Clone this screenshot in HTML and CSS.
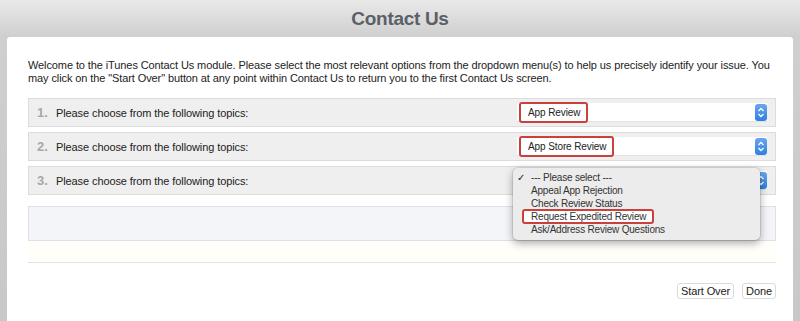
FILE: index.html
```html
<!DOCTYPE html>
<html>
<head>
    <title>Contact Us</title>
    <link rel="stylesheet" href="styles.css">
</head>
<body>
    <div class="header">
        <h1>Contact Us</h1>
    </div>
    <div class="panel">
        <p class="intro">Welcome to the iTunes Contact Us module. Please select the most relevant options from the dropdown menu(s) to help us precisely identify your issue. You may click on the "Start Over" button at any point within Contact Us to return you to the first Contact Us screen.</p>

        <div class="rows">
            <div class="row">
                <span class="num">1.</span>
                <span class="label">Please choose from the following topics:</span>
                <div class="select">
                    <span class="value"><span class="marked">App Review</span></span>
                    <span class="arrow"><svg width="8" height="11" viewBox="0 0 8 11"><path d="M1.5 4 L4 1.5 L6.5 4 M1.5 7 L4 9.5 L6.5 7" fill="none" stroke="#fff" stroke-width="1.3"/></svg></span>
                </div>
            </div>
            <div class="row">
                <span class="num">2.</span>
                <span class="label">Please choose from the following topics:</span>
                <div class="select">
                    <span class="value"><span class="marked">App Store Review</span></span>
                    <span class="arrow"><svg width="8" height="11" viewBox="0 0 8 11"><path d="M1.5 4 L4 1.5 L6.5 4 M1.5 7 L4 9.5 L6.5 7" fill="none" stroke="#fff" stroke-width="1.3"/></svg></span>
                </div>
            </div>
            <div class="row">
                <span class="num">3.</span>
                <span class="label">Please choose from the following topics:</span>
                <div class="select">
                    <span class="value"></span>
                    <span class="arrow"><svg width="8" height="11" viewBox="0 0 8 11"><path d="M1.5 4 L4 1.5 L6.5 4 M1.5 7 L4 9.5 L6.5 7" fill="none" stroke="#fff" stroke-width="1.3"/></svg></span>
                </div>
                <ul class="menu">
                    <li><span class="check">&#10003;</span>--- Please select ---</li>
                    <li>Appeal App Rejection</li>
                    <li>Check Review Status</li>
                    <li><span class="marked">Request Expedited Review</span></li>
                    <li>Ask/Address Review Questions</li>
                </ul>
            </div>
        </div>

        <div class="details"></div>
        <div class="spacer"></div>

        <div class="actions">
            <button>Start Over</button>
            <button>Done</button>
        </div>
    </div>
</body>
</html>
```

FILE: styles.css
```css
body {
    margin: 0;
    height: 321px;
    overflow: hidden;
    background: linear-gradient(#e9e9e9, #cfcfcf 37px, #c8c8c8);
    font-family: "Liberation Sans", Arial, sans-serif;
    color: #222;
    display: flex;
    flex-direction: column;
}
.header {
    height: 37px;
    display: flex;
    align-items: center;
    justify-content: center;
}
h1 {
    margin: 0;
    font-size: 19px;
    font-weight: bold;
    color: #5b6068;
    letter-spacing: -0.3px;
}
.panel {
    flex: 1;
    margin: 0 7px;
    background: #fff;
    border-radius: 3px 3px 0 0;
    padding: 22px 17px 0 21px;
}
.intro {
    margin: 0;
    font-size: 11px;
    line-height: 12.5px;
    letter-spacing: -0.1px;
}
.rows {
    margin-top: 14px;
    display: flex;
    flex-direction: column;
    gap: 5px;
}
.row {
    position: relative;
    height: 27px;
    background: #efefef;
    border: 1px solid #dcdcdc;
    display: flex;
    align-items: center;
    font-size: 11px;
}
.num {
    width: 19px;
    margin-left: 8px;
    font-size: 13px;
    font-weight: bold;
    color: #a8a8a8;
}
.label {
    flex: 1;
    letter-spacing: -0.1px;
}
.select {
    width: 250px;
    height: 18px;
    margin-right: 8px;
    background: #fff;
    border-bottom: 1px solid #e2e2e2;
    display: flex;
    align-items: center;
    font-size: 10px;
    letter-spacing: -0.1px;
}
.value {
    flex: 1;
    padding-left: 2px;
}
.marked {
    display: inline-block;
    padding: 3px 6px 3px 7px;
    border: 2px solid #c9403d;
    border-radius: 3px;
    background: #fff;
}
.arrow {
    width: 12px;
    height: 17px;
    border-radius: 3px;
    background: linear-gradient(#6aa6ee, #2f7fe0);
    display: flex;
    align-items: center;
    justify-content: center;
}
.menu {
    position: absolute;
    top: 1px;
    left: 484px;
    width: 247px;
    margin: 0;
    padding: 3px 0 4px;
    list-style: none;
    background: #ececec;
    border-radius: 5px;
    box-shadow: 0 3px 8px rgba(0, 0, 0, 0.35), 0 0 0 1px rgba(0, 0, 0, 0.08);
    font-size: 10px;
    letter-spacing: -0.2px;
    z-index: 2;
}
.menu li {
    position: relative;
    height: 13px;
    line-height: 13px;
    padding-left: 18px;
    color: #333;
}
.menu li .marked {
    margin: -1px 0 -1px -9px;
    padding: 0 6px 0 7px;
    line-height: 11px;
    vertical-align: top;
}
.check {
    position: absolute;
    left: 4px;
    color: #222;
}
.details {
    margin-top: 11px;
    height: 33px;
    background: #f4f5f9;
    border: 1px solid #dfe1ea;
}
.spacer {
    height: 21px;
    background: #fffef9;
    border-bottom: 1px solid #e2e2e2;
}
.actions {
    margin-top: 20px;
    display: flex;
    justify-content: flex-end;
    gap: 8px;
}
button {
    font-family: "Liberation Sans", Arial, sans-serif;
    font-size: 11px;
    letter-spacing: -0.1px;
    color: #222;
    background: #fff;
    border: 1px solid #dadada;
    border-radius: 3px;
    height: 16px;
    padding: 0 3px;
}
```
